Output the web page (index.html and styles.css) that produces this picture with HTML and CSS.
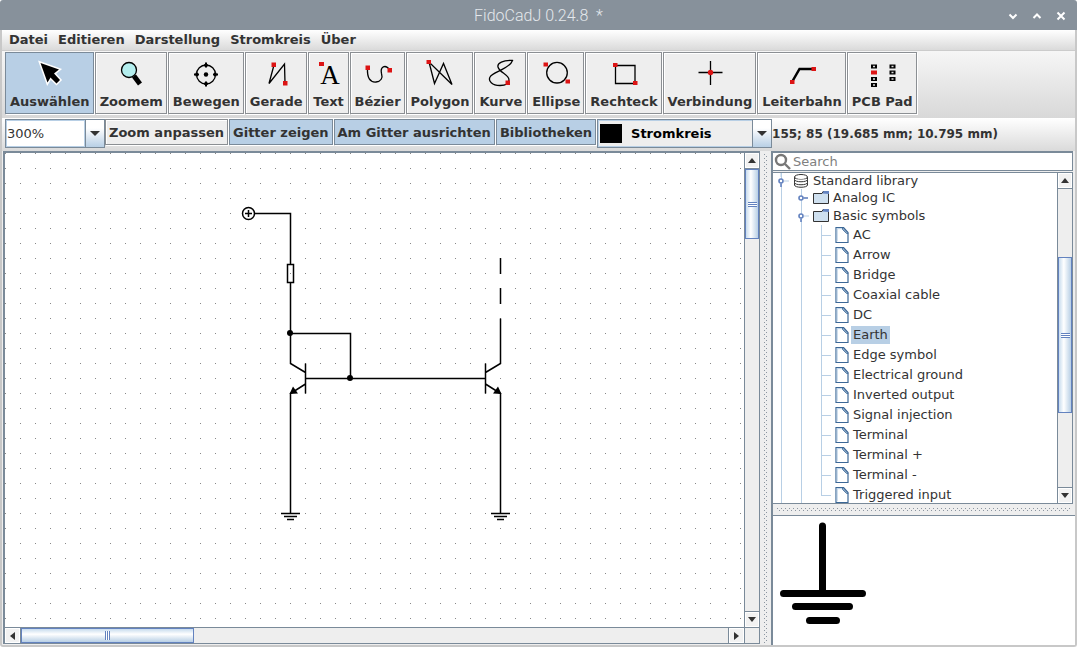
FILE: index.html
```html
<!DOCTYPE html>
<html lang="de">
<head>
<meta charset="utf-8">
<title>FidoCadJ 0.24.8 *</title>
<link rel="stylesheet" href="styles.css">
</head>
<body>
<div class="window">
  <header class="titlebar">
    <h1 class="title">FidoCadJ 0.24.8&nbsp; *</h1>
    <div class="window-controls">
      <button aria-label="Minimieren"><svg width="12" height="12"><path d="M2.500 4.500L6 8l3.500-3.500"/></svg></button>
      <button aria-label="Maximieren"><svg width="12" height="12"><path d="M2.500 8L6 4.500 9.500 8"/></svg></button>
      <button aria-label="Schließen"><svg width="12" height="12"><path d="M2.500 2.500l7 7M9.500 2.500l-7 7"/></svg></button>
    </div>
  </header>
  <div class="frame">
    <nav class="menubar">
      <button>Datei</button><button>Editieren</button><button>Darstellung</button><button>Stromkreis</button><button>Über</button>
    </nav>

    <div class="toolbar tools">
      <button class="tool" aria-pressed="true"><svg class="icon" viewBox="0 0 32 32"><path d="M6.500 5L25 11.500 20 15.500 26 22 22.500 25.500 16.500 19.500 13.500 24.500z" fill="#000" stroke="#fff" stroke-width="3" paint-order="stroke"/></svg>Auswählen</button>
      <button class="tool" aria-pressed="false"><svg class="icon" viewBox="0 0 32 32"><path d="M19 18l6 8" stroke-width="5"/><circle cx="14" cy="12" r="7.500" fill="#b4eeee"/></svg>Zoomem</button>
      <button class="tool" aria-pressed="false"><svg class="icon" viewBox="0 0 32 32"><circle cx="16" cy="16.500" r="9.500"/><path d="M16 4.500v5M16 23.500v5M4 16.500h5M23 16.500h5" stroke-width="2"/><path d="M16 6v2.500M16 24.500v2.500M5.500 16.500h2.500M24 16.500h2.500" stroke-width="3.500"/><circle cx="16" cy="16.500" r="2.200" fill="#000" stroke="none"/></svg>Bewegen</button>
      <button class="tool" aria-pressed="false"><svg class="icon" viewBox="0 0 32 32"><path d="M14 7L9 25.500 24.500 6l.5 19"/><path class="red" d="M11.500 4.500h4.500v4.500h-4.500zM23 23h4.500v4.500H23z"/></svg>Gerade</button>
      <button class="tool" aria-pressed="false"><svg class="icon" viewBox="0 0 32 32"><text class="glyph" x="17" y="26">A</text><path class="red" d="M6 4h5v4H6z"/></svg>Text</button>
      <button class="tool" aria-pressed="false"><svg class="icon" viewBox="0 0 32 32"><path d="M5.500 10C5 20 8 24.500 14 24c5-.5 7-4 5.500-8.500C18 9 23 5.500 28 12"/><path class="red" d="M3.500 7.500H8V12H3.500zM25.500 10H30v4.500h-4.500z"/></svg>Bézier</button>
      <button class="tool" aria-pressed="false"><svg class="icon" viewBox="0 0 32 32"><path d="M5 4l5.500 21.500 9-20 8.500 21z"/><path class="red" d="M2.500 2H7v4H2.500z"/></svg>Polygon</button>
      <button class="tool" aria-pressed="false"><svg class="icon" viewBox="0 0 32 32"><path d="M27.500 2.500C18 2 12 5 13 9c1.500 6 11 7 11 13 0 4-4 5.500-9 5.500C7 27.500 3 23 5 19c2-5 20-8 22.500-16.500z"/><path class="red" d="M20.500 22.500H25V27h-4.500z"/></svg>Kurve</button>
      <button class="tool" aria-pressed="false"><svg class="icon" viewBox="0 0 32 32"><circle cx="17" cy="14.700" r="10.300"/><path class="red" d="M3.500 4.500H8v4H3.500zM25.500 21.500H30v4h-4.500z"/></svg>Ellipse</button>
      <button class="tool" aria-pressed="false"><svg class="icon" viewBox="0 0 32 32"><path d="M7.500 7.500h19.500v18H7.500z"/><path class="red" d="M5 5h4.500v4H5zM25 23h4.500v4H25z"/></svg>Rechteck</button>
      <button class="tool" aria-pressed="false"><svg class="icon" viewBox="0 0 32 32"><path d="M16.500 3v24M4.500 14.500h24"/><circle class="red" cx="16.500" cy="14.500" r="2.700"/></svg>Verbindung</button>
      <button class="tool" aria-pressed="false"><svg class="icon" viewBox="0 0 32 32"><path d="M6 24l7.500-13H28" stroke-width="2.500"/><path class="red" d="M4 22h4.500v4H4zM25.500 9H30v4h-4.500z"/></svg>Leiterbahn</button>
      <button class="tool" aria-pressed="false"><svg class="icon" viewBox="0 0 32 32"><path d="M5 8.500h6M5 21h6M5 27h6M23.500 8.500h6M23.500 14.500h6M23.500 21h6" stroke-width="4"/><path d="M7 8.500h2M7 21h2M7 27h2M25.500 8.500h2M25.500 14.500h2M25.500 21h2" stroke="#ddd" stroke-width="1.500"/><path class="red" d="M5 12.500h6v4H5z"/></svg>PCB Pad</button>
    </div>

    <div class="toolbar options">
      <div class="combo zoom">
        <input type="text" value="300%" aria-label="Zoom">
        <button class="drop" aria-label="Zoomstufen"><svg width="10" height="5"><path d="M0 0h10l-5 5z"/></svg></button>
      </div>
      <button class="option" aria-pressed="false">Zoom anpassen</button>
      <button class="option" aria-pressed="true">Gitter zeigen</button>
      <button class="option" aria-pressed="true">Am Gitter ausrichten</button>
      <button class="option" aria-pressed="true">Bibliotheken</button>
      <div class="combo layer">
        <span class="swatch"></span>
        <select aria-label="Ebene"><option>Stromkreis</option></select>
        <span class="drop"><svg width="10" height="5"><path d="M0 0h10l-5 5z"/></svg></span>
      </div>
      <output class="coords">155; 85 (19.685 mm; 10.795 mm)</output>
    </div>

    <main class="workspace">
      <section class="editor" aria-label="Zeichnung">
        <svg class="drawing">
          <defs><pattern id="grid" width="15" height="15" patternUnits="userSpaceOnUse"><rect width="1" height="1" fill="#888"/></pattern></defs>
          <rect width="100%" height="100%" fill="url(#grid)"/>
          <g class="wires">
            <circle cx="243.500" cy="60.500" r="6"/><path d="M240 60.500h7M243.500 57v7"/>
            <path d="M249.500 60.500h36v51M282.500 111.500h6v18h-6zM285.500 129.500v81l15 9M285.500 180.500h60v45M300.500 210.500v30M300.500 225.500h180M300.500 231l-15 9.500v120"/>
            <path d="M480.500 210.500v30M480.500 219.500l15-9v-45M495.500 105v16M495.500 135v16M480.500 231l15 9.500v120"/>
            <path d="M276 360.500h19M279 363.500h13M282 366.500h7M486 360.500h19M489 363.500h13M492 366.500h7"/>
          </g>
          <circle cx="285" cy="180" r="3"/><circle cx="345" cy="225" r="3"/>
          <path d="M284.500 241l3.500-7.500 5 7zM496.500 241l-3.500-7.500-5 7z"/>
        </svg>
        <div class="scroll vertical canvas-v">
          <button aria-label="Nach oben"><svg width="8" height="5"><path d="M0 5h8L4 0z"/></svg></button>
          <div class="track"><div class="thumb"></div></div>
          <button aria-label="Nach unten"><svg width="8" height="5"><path d="M0 0h8L4 5z"/></svg></button>
        </div>
        <div class="scroll horizontal">
          <button aria-label="Nach links"><svg width="5" height="8"><path d="M5 0v8L0 4z"/></svg></button>
          <div class="track"><div class="thumb"></div></div>
          <button aria-label="Nach rechts"><svg width="5" height="8"><path d="M0 0v8l5-4z"/></svg></button>
        </div>
        <div class="corner"></div>
      </section>
      <div class="divider divider-v"></div>
      <aside class="library">
        <label class="search">
          <svg width="18" height="18"><circle cx="7" cy="7" r="5"/><path d="M11 11l5 5"/></svg>
          <input type="text" placeholder="Search" aria-label="Search">
        </label>
        <div class="tree-pane">
          <ul class="tree" role="tree">
            <li role="treeitem" aria-expanded="true"><div class="row root"><svg class="knob" viewBox="0 0 12 16"><path d="M4 0v4M7 8h5" class="guide"/><circle cx="4" cy="8" r="2"/><path d="M4 10.500V14"/></svg><svg class="disk" viewBox="0 0 16 16"><path d="M1.500 4v8c0 3 13 3 13 0V4"/><ellipse cx="8" cy="4" rx="6.500" ry="2.500"/><path d="M1.500 6.500c0 3 13 3 13 0M1.500 9.500c0 3 13 3 13 0"/></svg>Standard library</div>
              <ul role="group" class="branch">
                <li role="treeitem" aria-expanded="false"><div class="row"><svg class="knob" viewBox="0 0 12 16"><circle cx="4" cy="8" r="2"/><path d="M6.500 8H11"/></svg><svg class="folder" viewBox="0 0 16 16"><path d="M.5 13.500v-10H9l1-2h5.500v12z"/><path class="tab" d="M9.500 3.500l1-2.500H16v3z"/></svg>Analog IC</div></li>
                <li role="treeitem" aria-expanded="true"><div class="row"><svg class="knob" viewBox="0 0 12 16"><path d="M7 8h5" class="guide"/><circle cx="4" cy="8" r="2"/><path d="M4 10.500V14"/></svg><svg class="folder" viewBox="0 0 16 16"><path d="M.5 13.500v-10H9l1-2h5.500v12z"/><path class="tab" d="M9.500 3.500l1-2.500H16v3z"/></svg>Basic symbols</div>
                  <ul role="group" class="leaves">
                    <li role="treeitem"><svg class="sheet" viewBox="0 0 14 16"><use href="#sheet"/></svg><span>AC</span></li>
                    <li role="treeitem"><svg class="sheet" viewBox="0 0 14 16"><use href="#sheet"/></svg><span>Arrow</span></li>
                    <li role="treeitem"><svg class="sheet" viewBox="0 0 14 16"><use href="#sheet"/></svg><span>Bridge</span></li>
                    <li role="treeitem"><svg class="sheet" viewBox="0 0 14 16"><use href="#sheet"/></svg><span>Coaxial cable</span></li>
                    <li role="treeitem"><svg class="sheet" viewBox="0 0 14 16"><use href="#sheet"/></svg><span>DC</span></li>
                    <li role="treeitem" aria-selected="true"><svg class="sheet" viewBox="0 0 14 16"><use href="#sheet"/></svg><span>Earth</span></li>
                    <li role="treeitem"><svg class="sheet" viewBox="0 0 14 16"><use href="#sheet"/></svg><span>Edge symbol</span></li>
                    <li role="treeitem"><svg class="sheet" viewBox="0 0 14 16"><use href="#sheet"/></svg><span>Electrical ground</span></li>
                    <li role="treeitem"><svg class="sheet" viewBox="0 0 14 16"><use href="#sheet"/></svg><span>Inverted output</span></li>
                    <li role="treeitem"><svg class="sheet" viewBox="0 0 14 16"><use href="#sheet"/></svg><span>Signal injection</span></li>
                    <li role="treeitem"><svg class="sheet" viewBox="0 0 14 16"><use href="#sheet"/></svg><span>Terminal</span></li>
                    <li role="treeitem"><svg class="sheet" viewBox="0 0 14 16"><use href="#sheet"/></svg><span>Terminal +</span></li>
                    <li role="treeitem"><svg class="sheet" viewBox="0 0 14 16"><use href="#sheet"/></svg><span>Terminal -</span></li>
                    <li role="treeitem"><svg class="sheet" viewBox="0 0 14 16"><use href="#sheet"/></svg><span>Triggered input</span></li>
                  </ul>
                </li>
              </ul>
            </li>
          </ul>
          <div class="scroll vertical tree-v">
            <button aria-label="Nach oben"><svg width="8" height="5"><path d="M0 5h8L4 0z"/></svg></button>
            <div class="track"><div class="thumb"></div></div>
            <button aria-label="Nach unten"><svg width="8" height="5"><path d="M0 0h8L4 5z"/></svg></button>
          </div>
        </div>
        <div class="divider divider-h"></div>
        <div class="preview"><svg width="100" height="112"><path d="M49.500 10v67M10.500 77.500h79M22.500 90.500h54M36.500 104.500h27"/></svg></div>
      </aside>
    </main>
  </div>
</div>
<svg class="symbols" width="0" height="0"><defs><g id="sheet"><path d="M1 .5h7.500l4.500 5v10H1z" fill="#fff" stroke="#3b6796" stroke-width="1.200"/><path d="M2.200 14.300V1.700H8" fill="none" stroke="#b8cfe5"/><path d="M7.500 1v1.500l4 4H13z" fill="#b8cfe5" stroke="#3b6796" stroke-width=".8"/></g></defs></svg>
</body>
</html>
```
FILE: styles.css
```css
* { box-sizing: border-box; }
body { margin: 0; background: #fff; color: #333; font: 13px/16px "DejaVu Sans", sans-serif; }
button, input, select { font: inherit; color: inherit; margin: 0; padding: 0; border: 0; border-radius: 0; background: none; }
ul { list-style: none; margin: 0; padding: 0; }
svg { display: block; flex: none; }
.symbols { position: absolute; }

.window { display: flex; flex-direction: column; height: 100vh; padding-bottom: 2px; }
.titlebar { display: grid; grid-template-columns: 1fr auto 1fr; align-items: center; height: 30px; flex: none; background: #87919b; border-radius: 3px 3px 0 0; }
.title { grid-column: 2; margin: 0; font: 300 16px/20px Roboto, sans-serif; color: #e4e8ec; padding-top: 2px; }
.window-controls { display: flex; justify-content: flex-end; gap: 12px; padding: 2px 10px 0 0; }
.window-controls path { fill: none; stroke: #fff; stroke-width: 2; }

.frame { display: flex; flex-direction: column; flex: 1; min-height: 0; background: #eee; border: solid #c8c8c8; border-width: 0 2px 2px; border-radius: 0 0 3px 3px; }
.menubar { display: flex; gap: 10px; height: 21px; padding: 2px 7px; font-weight: bold; background: linear-gradient(#fff, #dadada); border-bottom: 1px solid #ccc; }

.toolbar { display: flex; gap: 1px; padding-left: 3px; font-weight: bold; flex: none; }
.tools { height: 67px; padding-top: 1px; background: linear-gradient(#f6f6f6, #d8d8d8); }
.options { height: 33px; padding-top: 1px; background: linear-gradient(#fff, #dadada); }
.tool, .option { border: 1px solid #8b8f93; background: #eee; box-shadow: inset 1px 1px #fff, 1px 1px #fff; white-space: nowrap; }
.tool { display: flex; flex-direction: column; align-items: center; gap: 4px; height: 62px; padding: 5px 3px 3px 4px; }
.option { height: 26px; padding: 2px 3px 0; }
.tool[aria-pressed="true"], .option[aria-pressed="true"] { background: #b8cfe5; border-color: #7a8a99; box-shadow: 1px 1px #fff; }
.icon { width: 32px; height: 32px; fill: none; stroke: #000; stroke-width: 1.3; }
.icon .red { fill: #dc1414; stroke: none; }
.icon .glyph { fill: #000; stroke: none; font: 27px "Liberation Serif", serif; text-anchor: middle; }

.combo { display: grid; align-items: stretch; height: 29px; border: 1px solid #7a8a99; background: #eee; }
.zoom { width: 100px; grid-template-columns: 1fr 19px; margin-right: -1px; font-weight: normal; }
.zoom input { min-width: 0; padding: 0; background: #fff; border: 1px solid #b8cfe5; }
.layer { width: 175px; grid-template-columns: 32px 1fr 19px; }
.layer select { grid-area: 1 / 1 / 2 / 4; appearance: none; padding-left: 32px; color: #000; font-weight: bold; border: 1px solid #b8cfe5; }
.swatch { grid-area: 1 / 1; margin: 4px 7px 4px 2px; width: 22px; background: #000; z-index: 1; pointer-events: none; }
.drop { display: flex; align-items: center; justify-content: center; background: linear-gradient(#fff, #fff 30%, #b8cfe5); border-left: 1px solid #7a8a99; }
.layer .drop { grid-area: 1 / 3; z-index: 1; pointer-events: none; }
.drop path, .scroll path { fill: #333; }
.coords { align-self: flex-start; padding-top: 7px; white-space: nowrap; margin-left: -1px; font-size: 12px; }

.workspace { display: grid; grid-template-columns: minmax(0, 1fr) 11px 304px; flex: 1; min-height: 0; }
.editor { display: grid; grid-template: minmax(0, 1fr) 16px / minmax(0, 1fr) 15px; margin-left: 1px; border: solid #7a8a99; border-width: 2px 1px 1px 2px; margin-bottom: 1px; }
.drawing { width: 100%; height: 100%; background: #fff; }
.wires { fill: none; stroke: #000; stroke-width: 1.5; }

.scroll { display: flex; background: #eee; min-height: 0; }
.scroll button { display: flex; align-items: center; justify-content: center; flex: none; background: #f2f2f2; border: 1px solid #fff; }
.vertical { flex-direction: column; border-left: 1px solid #7a8a99; }
.vertical button { height: 15px; width: 14px; }
.horizontal { border-top: 1px solid #7a8a99; }
.horizontal button { width: 15px; }
.track { display: flex; flex: 1; min-height: 0; min-width: 0; border: 0 solid #7a8a99; }
.vertical .track { flex-direction: column; border-width: 1px 0; }
.horizontal .track { border-width: 0 1px; }
.thumb { border: 1px solid #6382bf; }
.vertical .thumb { background: repeating-linear-gradient(#6382bf 0 1px, #fff 1px 2px) center / 9px 5px no-repeat, linear-gradient(90deg, #c8dcee, #fff 40%, #b8cfe5); }
.horizontal .thumb { background: repeating-linear-gradient(90deg, #6382bf 0 1px, #fff 1px 2px) center / 5px 9px no-repeat, linear-gradient(#c8dcee, #fff 40%, #b8cfe5); width: 173px; }
.canvas-v .thumb { height: 70px; }
.tree-v .track { padding-top: 68px; }
.tree-v .thumb { height: 156px; }
.corner { border: solid #7a8a99; border-width: 1px 0 0 1px; }

.divider { background: conic-gradient(at 1px 1px, transparent 75%, #8b95a0 0) 0 0 / 4px 4px content-box, conic-gradient(at 1px 1px, transparent 75%, #8b95a0 0) 2px 2px / 4px 4px content-box; }
.divider-v { padding: 3px 3px 2px 4px; }
.divider-h { height: 11px; padding: 4px 4px 3px; flex: none; }

.library { display: flex; flex-direction: column; min-height: 0; border-left: 2px solid #7a8a99; }
.search { display: flex; align-items: center; height: 20px; margin-right: 2px; background: #fff; border: solid #7a8a99; border-width: 2px 1px 1px 0; flex: none; }
.search svg { fill: none; stroke: #777; stroke-width: 2.4; margin-left: 1px; }
.search input { flex: 1; min-width: 0; padding-left: 1px; outline: 0; }
.search input::placeholder { color: #808080; opacity: 1; }
.tree-pane { display: flex; flex: 1; min-height: 0; margin: 1px 2px 0 0; border: 1px solid #7a8a99; border-left: 0; background: #fff; }
.tree { flex: 1; overflow: hidden; background: linear-gradient(#b8cfe5, #b8cfe5) 8px 0 / 1px 100% no-repeat; padding-left: 4px; }
.row { display: flex; align-items: center; height: 18px; }
.root { height: 16px; }
.knob { width: 12px; height: 16px; margin-right: 4px; fill: #fff; stroke: #6382bf; stroke-width: 1.6; }
.knob .guide { stroke: #b8cfe5; stroke-width: 1; }
.disk, .folder { width: 16px; height: 16px; margin-right: 4px; fill: #fff; stroke: #333; }
.folder { fill: #cfe0ef; }
.folder .tab { fill: #6382bf; stroke: none; }
.branch { padding-left: 20px; background: linear-gradient(#b8cfe5, #b8cfe5) 24px 0 / 1px 100% no-repeat; }
.leaves { padding-left: 24px; }
.leaves li { display: flex; align-items: center; height: 20px; padding-left: 14px; background: linear-gradient(#b8cfe5, #b8cfe5) 0 0 / 1px 100% no-repeat, linear-gradient(#b8cfe5, #b8cfe5) 0 10px / 10px 1px no-repeat; }
.leaves li:last-child { background-size: 1px 10px, 10px 1px; }
.leaves span { padding: 1px 2px; height: 18px; }
.sheet { width: 14px; height: 16px; margin-right: 2px; }
[aria-selected="true"] span { background: #b8cfe5; }
.preview { flex: none; height: 130px; background: #fff; border-top: 1px solid #7a8a99; overflow: hidden; }
.preview path { fill: none; stroke: #000; stroke-width: 7; stroke-linecap: round; }
```
